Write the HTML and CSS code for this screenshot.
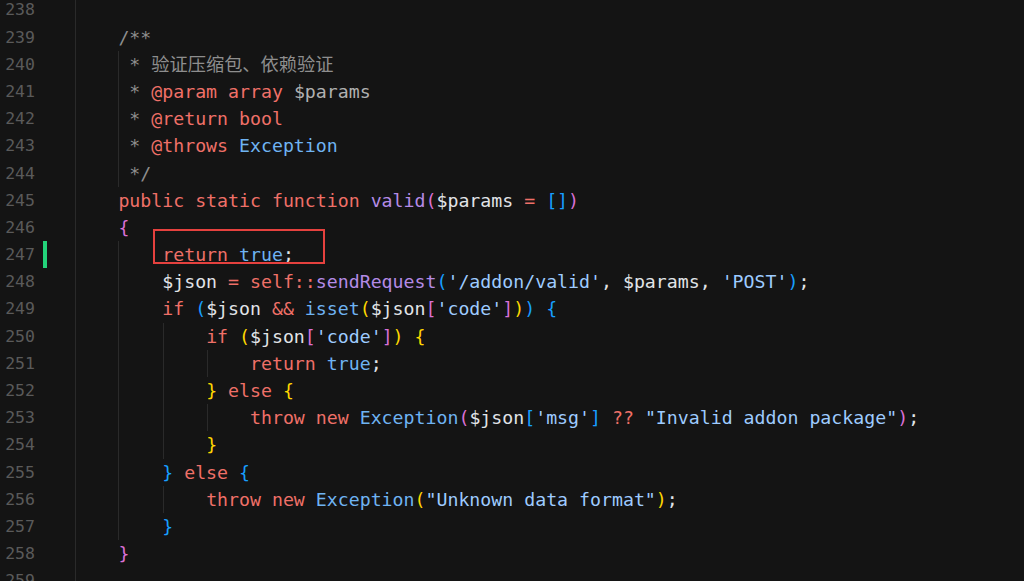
FILE: index.html
```html
<!DOCTYPE html>
<html lang="zh">
<head>
<meta charset="utf-8">
<title>valid</title>
<link rel="stylesheet" href="styles.css">
</head>
<body>
<div class="editor">
  <div class="line"><div class="gutter"><span class="ln">238</span><span class="mark"></span></div><div class="code g1"></div></div>
  <div class="line"><div class="gutter"><span class="ln">239</span><span class="mark"></span></div><div class="code g1">    <span class="cm">/**</span></div></div>
  <div class="line"><div class="gutter"><span class="ln">240</span><span class="mark"></span></div><div class="code g2">     <span class="cm">* 验证压缩包、依赖验证</span></div></div>
  <div class="line"><div class="gutter"><span class="ln">241</span><span class="mark"></span></div><div class="code g2">     <span class="cm">* </span><span class="k">@param</span> <span class="k">array</span> <span class="cv">$params</span></div></div>
  <div class="line"><div class="gutter"><span class="ln">242</span><span class="mark"></span></div><div class="code g2">     <span class="cm">* </span><span class="k">@return</span> <span class="k">bool</span></div></div>
  <div class="line"><div class="gutter"><span class="ln">243</span><span class="mark"></span></div><div class="code g2">     <span class="cm">* </span><span class="k">@throws</span> <span class="c">Exception</span></div></div>
  <div class="line"><div class="gutter"><span class="ln">244</span><span class="mark"></span></div><div class="code g2">     <span class="cm">*/</span></div></div>
  <div class="line"><div class="gutter"><span class="ln">245</span><span class="mark"></span></div><div class="code g1">    <span class="k">public static function</span> <span class="f">valid</span><span class="bp">(</span><span class="v">$params</span> <span class="k">=</span> <span class="bb">[]</span><span class="bp">)</span></div></div>
  <div class="line"><div class="gutter"><span class="ln">246</span><span class="mark"></span></div><div class="code g1">    <span class="bp">{</span></div></div>
  <div class="line"><div class="gutter"><span class="ln">247</span><span class="mark on"></span></div><div class="code g2">        <span class="k">return</span> <span class="c">true</span>;<span class="annot"></span></div></div>
  <div class="line"><div class="gutter"><span class="ln">248</span><span class="mark"></span></div><div class="code g2">        <span class="v">$json</span> <span class="k">=</span> <span class="k">self::</span><span class="f">sendRequest</span><span class="bb">(</span><span class="s">'/addon/valid'</span>, <span class="v">$params</span>, <span class="s">'POST'</span><span class="bb">)</span>;</div></div>
  <div class="line"><div class="gutter"><span class="ln">249</span><span class="mark"></span></div><div class="code g2">        <span class="k">if</span> <span class="bb">(</span><span class="v">$json</span> <span class="k">&amp;&amp;</span> <span class="c">isset</span><span class="by">(</span><span class="v">$json</span><span class="bp">[</span><span class="s">'code'</span><span class="bp">]</span><span class="by">)</span><span class="bb">)</span> <span class="bb">{</span></div></div>
  <div class="line"><div class="gutter"><span class="ln">250</span><span class="mark"></span></div><div class="code g3">            <span class="k">if</span> <span class="by">(</span><span class="v">$json</span><span class="bp">[</span><span class="s">'code'</span><span class="bp">]</span><span class="by">)</span> <span class="by">{</span></div></div>
  <div class="line"><div class="gutter"><span class="ln">251</span><span class="mark"></span></div><div class="code g4">                <span class="k">return</span> <span class="c">true</span>;</div></div>
  <div class="line"><div class="gutter"><span class="ln">252</span><span class="mark"></span></div><div class="code g3">            <span class="by">}</span> <span class="k">else</span> <span class="by">{</span></div></div>
  <div class="line"><div class="gutter"><span class="ln">253</span><span class="mark"></span></div><div class="code g4">                <span class="k">throw new</span> <span class="c">Exception</span><span class="bp">(</span><span class="v">$json</span><span class="bb">[</span><span class="s">'msg'</span><span class="bb">]</span> <span class="k">??</span> <span class="s">"Invalid addon package"</span><span class="bp">)</span>;</div></div>
  <div class="line"><div class="gutter"><span class="ln">254</span><span class="mark"></span></div><div class="code g3">            <span class="by">}</span></div></div>
  <div class="line"><div class="gutter"><span class="ln">255</span><span class="mark"></span></div><div class="code g2">        <span class="bb">}</span> <span class="k">else</span> <span class="bb">{</span></div></div>
  <div class="line"><div class="gutter"><span class="ln">256</span><span class="mark"></span></div><div class="code g3">            <span class="k">throw new</span> <span class="c">Exception</span><span class="by">(</span><span class="s">"Unknown data format"</span><span class="by">)</span>;</div></div>
  <div class="line"><div class="gutter"><span class="ln">257</span><span class="mark"></span></div><div class="code g2">        <span class="bb">}</span></div></div>
  <div class="line"><div class="gutter"><span class="ln">258</span><span class="mark"></span></div><div class="code g1">    <span class="bp">}</span></div></div>
  <div class="line"><div class="gutter"><span class="ln">259</span><span class="mark"></span></div><div class="code g1"></div></div>
</div>
</body>
</html>
```

FILE: styles.css
```css
:root {
  --bg: #141414;
  --guide: #2a2a2a;
}

html, body {
  margin: 0;
  padding: 0;
  height: 100%;
  overflow: hidden;
  background: var(--bg);
}

.editor {
  display: flex;
  flex-direction: column;
  margin-top: -3.6px;
  font-family: "DejaVu Sans Mono", "Noto Sans CJK SC", monospace;
  font-size: 18.23px;
  color: #e1e4e8;
}

.line {
  display: flex;
  height: 27.2px;
  line-height: 27.2px;
  flex: none;
}

.gutter {
  display: flex;
  width: 74px;
  flex: none;
}

.ln {
  width: 35px;
  text-align: right;
  color: #5a5a5a;
  font-size: 16.5px;
}

.mark {
  width: 4px;
  margin-left: 8px;
}

.mark.on {
  background: #23d37a;
}

.code {
  position: relative;
  flex: 1;
  padding-left: 0.5px;
  white-space: pre;
}

.g1 {
  background: linear-gradient(var(--guide), var(--guide)) 1px 0 / 1px 100% no-repeat;
}

.g2 {
  background:
    linear-gradient(var(--guide), var(--guide)) 1px 0 / 1px 100% no-repeat,
    linear-gradient(var(--guide), var(--guide)) 44px 0 / 1px 100% no-repeat;
}

.g3 {
  background:
    linear-gradient(var(--guide), var(--guide)) 1px 0 / 1px 100% no-repeat,
    linear-gradient(var(--guide), var(--guide)) 44px 0 / 1px 100% no-repeat,
    linear-gradient(var(--guide), var(--guide)) 89px 0 / 1px 100% no-repeat;
}

.g4 {
  background:
    linear-gradient(var(--guide), var(--guide)) 1px 0 / 1px 100% no-repeat,
    linear-gradient(var(--guide), var(--guide)) 44px 0 / 1px 100% no-repeat,
    linear-gradient(var(--guide), var(--guide)) 89px 0 / 1px 100% no-repeat,
    linear-gradient(var(--guide), var(--guide)) 133px 0 / 1px 100% no-repeat;
}

.k { color: #ef7068; }
.f { color: #b48be6; }
.c { color: #6fb3f2; }
.s { color: #9ecbff; }
.v { color: #e1e4e8; }
.cm { color: #8e8e8e; }
.cv { color: #b0b0b0; }
.by { color: #ffd700; }
.bp { color: #da70d6; }
.bb { color: #179fff; }

.annot {
  position: absolute;
  left: 79px;
  top: -11.7px;
  width: 172px;
  height: 35px;
  box-sizing: border-box;
  border: 2px solid #e5413e;
}
```
